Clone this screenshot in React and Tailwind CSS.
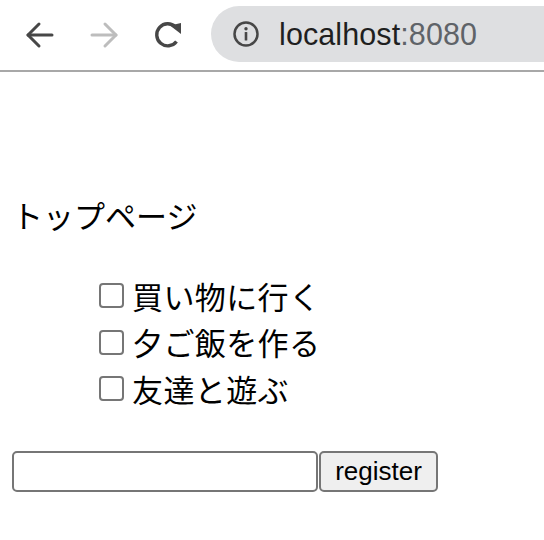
import { useState } from 'react';

const TODOS = ['買い物に行く', '夕ご飯を作る', '友達と遊ぶ'];

const BackIcon = ({ color }) => (
  <svg width="30" height="30" viewBox="0 0 30 30" fill="none" stroke={color} strokeWidth="3" strokeLinecap="round" strokeLinejoin="round">
    <path d="M27 15 H3" />
    <path d="M14 4 L3 15 L14 26" />
  </svg>
);

const ForwardIcon = ({ color }) => (
  <svg width="30" height="30" viewBox="0 0 30 30" fill="none" stroke={color} strokeWidth="3" strokeLinecap="round" strokeLinejoin="round">
    <path d="M3 15 H27" />
    <path d="M16 4 L27 15 L16 26" />
  </svg>
);

const ReloadIcon = () => (
  <svg width="32" height="32" viewBox="0 0 32 32">
    {/* arc leaves a gap at the upper right for the arrow head */}
    <path d="M23.5 22.5 A11 11 0 1 1 22.5 8" fill="none" stroke="#474747" strokeWidth="3.4" />
    <path d="M17 6.5 L28 4 L28 15 Z" fill="#474747" />
  </svg>
);

const InfoIcon = () => (
  <svg width="28" height="28" viewBox="0 0 28 28">
    <circle cx="14" cy="14" r="11.5" fill="none" stroke="#474747" strokeWidth="2.5" />
    <circle cx="14" cy="8.8" r="1.7" fill="#474747" />
    <rect x="12.7" y="12" width="2.6" height="8.5" rx="0.6" fill="#474747" />
  </svg>
);

const BrowserBar = () => (
  <div className="h-[72px] border-b-2 border-[#a8a8a8] flex items-center bg-white">
    <div className="ml-[25px] w-[30px] flex items-center"><BackIcon color="#474747" /></div>
    <div className="ml-[34px] w-[30px] flex items-center"><ForwardIcon color="#bdbdbd" /></div>
    <div className="ml-[34px] flex items-center"><ReloadIcon /></div>
    <div className="ml-[26px] h-[56px] flex-1 rounded-l-[28px] bg-[#dedfe1] flex items-center pl-[21px] -mt-[2px]">
      <InfoIcon />
      <span className="ml-[19px] text-[30.5px] leading-none font-['Liberation_Sans',Arial,sans-serif] text-[#1f1f1f] tracking-[0.1px]">
        localhost<span className="text-[#5f6368]">:8080</span>
      </span>
    </div>
  </div>
);

export default function App() {
  const [checked, setChecked] = useState({});
  const [text, setText] = useState('');

  return (
    <div className="w-[544px] h-[540px] bg-white overflow-hidden text-black font-['Noto_Sans_CJK_JP','Liberation_Sans',sans-serif]">
      <BrowserBar />

      <div className="pl-[12px]">
        <div className="mt-[120px] text-[31px] leading-[46.5px]">トップページ</div>

        <ul className="mt-[34px] pl-[77px] list-none">
          {TODOS.map((t, i) => (
            <li key={t} className="flex items-center text-[31px] leading-[46.5px]">
              <input
                type="checkbox"
                checked={!!checked[i]}
                onChange={() => setChecked({ ...checked, [i]: !checked[i] })}
                className="appearance-none ml-[10px] mr-[8px] w-[25px] h-[25px] border-2 border-[#767676] rounded-[4px] bg-white checked:bg-[#0075ff] checked:border-[#0075ff]"
              />
              <span className="tracking-[0.4px]">{t}</span>
            </li>
          ))}
        </ul>

        <div className="mt-[39px] flex items-center">
          <input
            value={text}
            onChange={(e) => setText(e.target.value)}
            className="w-[306px] h-[41px] border-2 border-[#767676] rounded-[5px] bg-white px-2 text-[26px] outline-none font-['Liberation_Sans',Arial,sans-serif]"
          />
          <button className="ml-[1px] w-[119px] h-[41px] border-2 border-[#767676] rounded-[5px] bg-[#efefef] text-[26px] leading-none pb-[2px] font-['Liberation_Sans',Arial,sans-serif]">
            register
          </button>
        </div>
      </div>
    </div>
  );
}
